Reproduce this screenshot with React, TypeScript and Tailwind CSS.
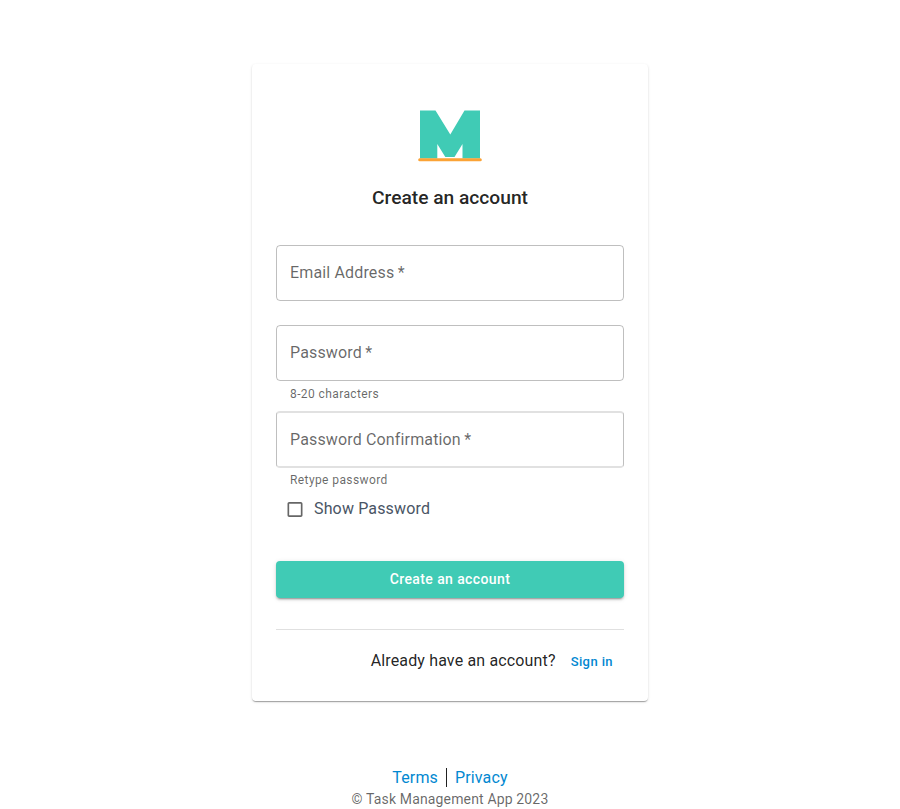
import React from "react";

function Field({ label, className = "", edge = "h-14 border border-black/25", text = "pb-[2px]" }: { label: string; className?: string; edge?: string; text?: string }) {
  return (
    <label className={`flex w-full shrink-0 items-center rounded px-[13px] text-base leading-[23px] tracking-[0.15px] text-black/60 ${edge} ${className}`}>
      <span className={text}>{label}<span className="ml-[3.4px]">*</span></span>
    </label>
  );
}

function Helper({ children }: { children: React.ReactNode }) {
  return <p className="mx-3.5 mt-[3px] text-xs leading-[20px] tracking-[0.4px] text-black/60">{children}</p>;
}

function Logo() {
  return (
    <svg className="h-16 w-16 shrink-0" viewBox="0 0 64 64" fill="none">
      <path d="M2 6.5h15.5L32.3 30.5 46.5 6.5H62v48H44.5V40l-8 13h-9.2l-8-13v14.5H2z" fill="#40cbb5" />
      <path d="M1.7 55.8h60.6" stroke="#fba336" strokeWidth="3" strokeLinecap="round" />
    </svg>
  );
}

export default function App() {
  return (
    <main className="flex h-[809px] flex-col items-center overflow-hidden bg-white pt-16 font-['Roboto',sans-serif] text-black/87">
      <section className="flex h-[637px] w-[396px] shrink-0 flex-col items-center rounded bg-white px-6 pt-10 shadow-[0_2px_1px_-1px_rgba(0,0,0,0.2),0_1px_1px_0_rgba(0,0,0,0.14),0_1px_3px_0_rgba(0,0,0,0.12)]">
        <Logo />
        <h1 className="mt-[14px] text-[19.2px] font-medium leading-[31px]">Create an account</h1>
        <Field label="Email Address" className="mt-8" />
        <Field label="Password" className="mt-6" />
        <div className="w-full"><Helper>8-20 characters</Helper></div>
        <Field label="Password Confirmation" className="mt-[7px]" edge="h-[57px] border-x border-y-2 border-x-black/25 border-y-black/12" text="pb-px" />
        <div className="-mt-px w-full"><Helper>Retype password</Helper></div>
        <div className="mt-[7px] flex w-full items-center pl-[9px] text-base leading-6 tracking-[0.15px] text-gray-600">
          <svg className="mr-[9px] h-5 w-5 text-black/60" viewBox="0 -0.6 24 24" fill="currentColor"><path d="M19 5v14H5V5h14m0-2H5c-1.1 0-2 .9-2 2v14c0 1.1.9 2 2 2h14c1.1 0 2-.9 2-2V5c0-1.1-.9-2-2-2z" /></svg>
          Show Password
        </div>
        <button className="mt-[39.5px] h-[37px] w-full rounded bg-[#40cbb5] pb-px text-sm font-medium tracking-[0.4px] text-white shadow-[0_3px_1px_-2px_rgba(0,0,0,0.2),0_2px_2px_0_rgba(0,0,0,0.14),0_1px_5px_0_rgba(0,0,0,0.12)]">Create an account</button>
        <hr className="mt-[31.5px] w-full border-black/12" />
        <div className="mt-[19px] flex w-full items-center justify-end pr-[11px]">
          <span className="text-base leading-6 tracking-[0.15px]">Already have an account?</span>
          <a className="ml-[15px] pt-[2px] text-[13px] font-medium leading-[22px] tracking-[0.4px] text-[#0288d1]">Sign in</a>
        </div>
      </section>
      <footer className="mt-[65px] flex flex-col items-center">
        <div className="flex h-6 items-center text-base tracking-[0.15px] text-[#0288d1]">
          <span>Terms</span><span className="mx-2 -mt-px h-[19px] w-px bg-black/87" /><span>Privacy</span>
        </div>
        <p className="-mt-px text-sm leading-5 tracking-[0.15px] text-black/60">© Task Management App 2023</p>
      </footer>
    </main>
  );
}
